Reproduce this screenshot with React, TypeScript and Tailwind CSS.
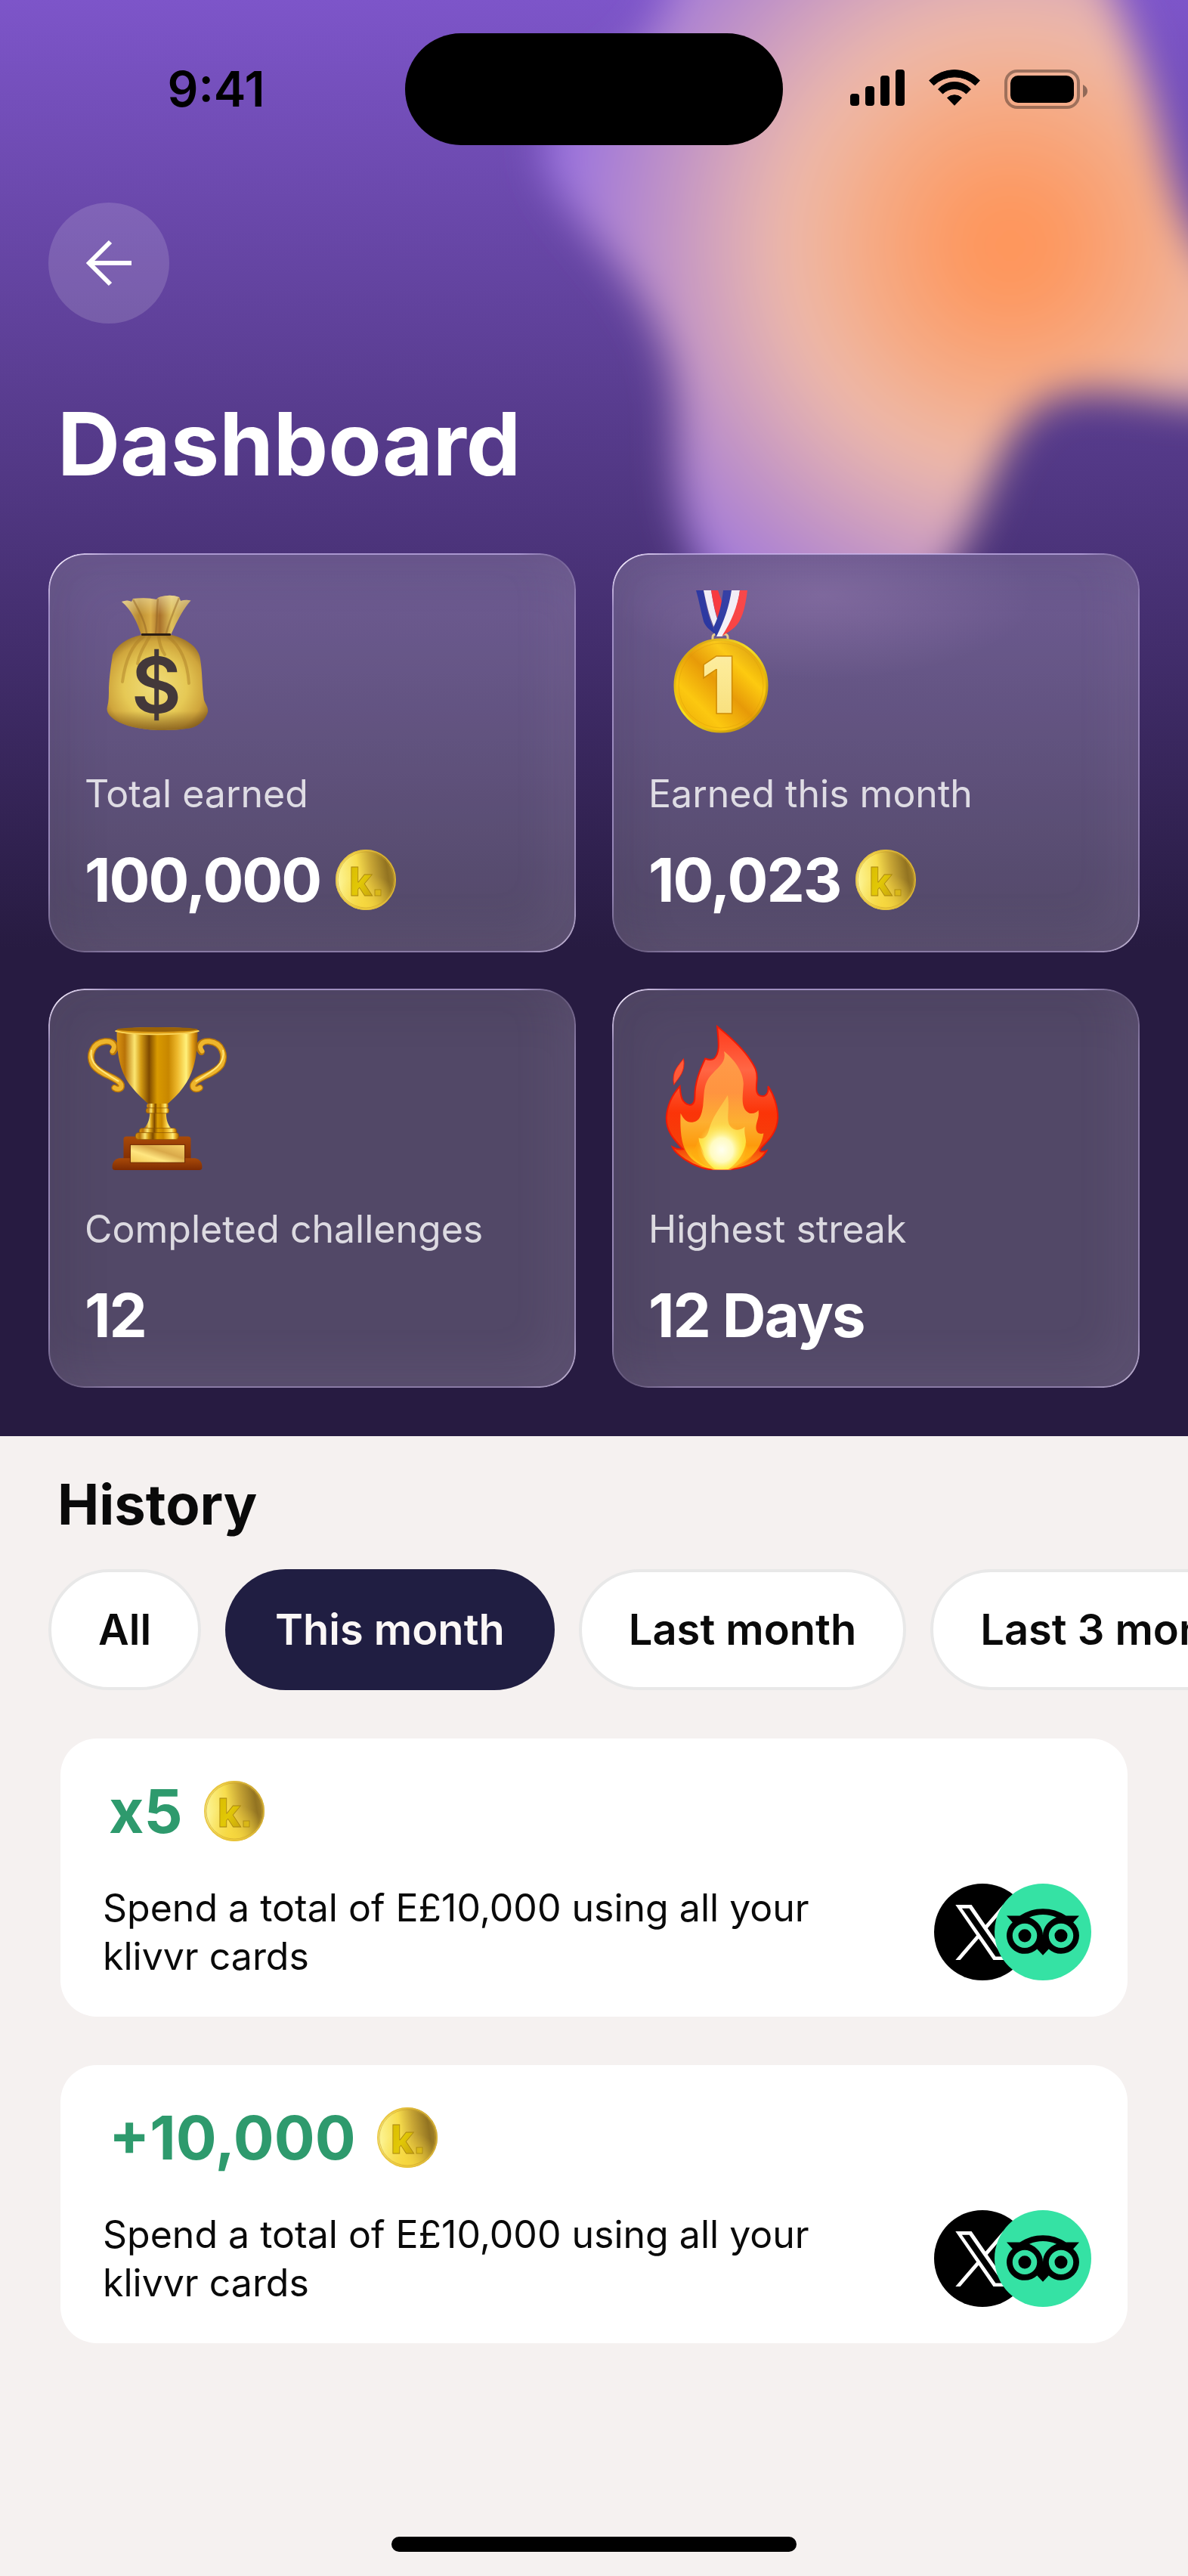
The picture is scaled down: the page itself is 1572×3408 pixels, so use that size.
import React, { useState } from "react";
import { SiTripadvisor } from "react-icons/si";

type StatCardProps = {
  label: string;
  value: string;
  icon: React.ReactNode;
  coin?: boolean;
  glow?: boolean;
};

type HistoryCardProps = {
  amount: string;
  description: string;
};

const filters = ["All", "This month", "Last month", "Last 3 months"];

const history: HistoryCardProps[] = [
  {
    amount: "x5",
    description: "Spend a total of E£10,000 using all your klivvr cards",
  },
  {
    amount: "+10,000",
    description: "Spend a total of E£10,000 using all your klivvr cards",
  },
];

function SignalIcon() {
  return (
    <svg className="h-12 w-[72px]" viewBox="0 0 72 48" aria-hidden="true">
      <rect x="0" y="32" width="12" height="16" rx="4" />
      <rect x="20" y="22" width="12" height="26" rx="4" />
      <rect x="40" y="8" width="12" height="40" rx="4" />
      <rect x="60" y="0" width="12" height="48" rx="4" />
    </svg>
  );
}

function WifiIcon() {
  return (
    <svg
      className="h-12 w-[68px]"
      viewBox="0 0 68 48"
      stroke="#000"
      strokeWidth="1"
      strokeLinejoin="round"
      aria-hidden="true">
      <path d="M.6 14.5A47 47 0 0 1 67.4 14.5L61.5 20.8A40 40 0 0 0 6.5 20.8Z" />
      <path d="M12.5 26A29 29 0 0 1 55.5 26L49.5 32A22 22 0 0 0 18.5 32Z" />
      <path d="M24.5 37.5A14 14 0 0 1 43.5 37.5L34 47.3Z" />
    </svg>
  );
}

function BatteryIcon() {
  return (
    <svg className="h-[52px] w-[110px]" viewBox="0 0 110 52" aria-hidden="true">
      <rect
        x="2"
        y="2"
        width="96"
        height="48"
        rx="15"
        fill="none"
        stroke="#000"
        strokeOpacity=".35"
        strokeWidth="4"
      />
      <path d="M104 20C108 22 110 25 110 28.500C110 32 108 35 104 37Z" fillOpacity=".4" />
      <rect x="8" y="8" width="84" height="36" rx="10" />
    </svg>
  );
}

function CoinIcon() {
  return (
    <svg className="size-20 shrink-0" viewBox="0 0 80 80" aria-hidden="true">
      <defs>
        <linearGradient id="coin-face" x1="0" y1=".45" x2="1" y2=".3">
          <stop offset="0" stopColor="#fdf69a" />
          <stop offset=".38" stopColor="#f7dd4d" />
          <stop offset=".6" stopColor="#c8a635" />
          <stop offset=".85" stopColor="#927321" />
          <stop offset="1" stopColor="#ab8a2b" />
        </linearGradient>
        <radialGradient id="coin-shine" cx=".5" cy="1" r=".6">
          <stop offset="0" stopColor="#f6d63c" />
          <stop offset="1" stopColor="#f6d63c" stopOpacity="0" />
        </radialGradient>
        <linearGradient id="coin-mark" x1="0" y1="0" x2="1" y2="1">
          <stop offset="0" stopColor="#d8ba00" />
          <stop offset=".5" stopColor="#e2c806" />
          <stop offset="1" stopColor="#c29c10" />
        </linearGradient>
      </defs>
      <circle cx="40" cy="40" r="40" fill="url(#coin-face)" />
      <circle cx="40" cy="40" r="40" fill="url(#coin-shine)" />
      <circle cx="40" cy="40" r="39" fill="none" stroke="#e3bd3a" strokeOpacity=".8" strokeWidth="2" />
      <circle cx="40" cy="40" r="37" fill="none" stroke="#c9a02c" strokeOpacity=".6" />
      <text
        x="18"
        y="61"
        fontFamily="Inter, sans-serif"
        fontSize="52"
        fontWeight="800"
        fill="url(#coin-mark)"
        stroke="#a98510"
        strokeWidth=".8">
        k
      </text>
      <rect x="52" y="53" width="8" height="8" fill="#d9b818" stroke="#a98510" strokeWidth=".8" />
    </svg>
  );
}

function MoneyBagIcon() {
  return (
    <svg className="size-48" viewBox="0 0 192 192" aria-hidden="true">
      <defs>
        <radialGradient id="bag-body" cx=".48" cy=".55" r=".62">
          <stop offset="0" stopColor="#efdc7c" />
          <stop offset=".5" stopColor="#e6c955" />
          <stop offset=".78" stopColor="#cfa53c" />
          <stop offset="1" stopColor="#8d6320" />
        </radialGradient>
        <linearGradient id="bag-neck" x1="0" x2="1">
          <stop offset="0" stopColor="#dcc078" />
          <stop offset=".25" stopColor="#b98a2f" />
          <stop offset=".42" stopColor="#d8ab45" />
          <stop offset=".55" stopColor="#a8702a" />
          <stop offset=".72" stopColor="#e0c05a" />
          <stop offset="1" stopColor="#b08a4a" />
        </linearGradient>
        <linearGradient id="bag-shade" x1="0" y1="0" x2="0" y2="1">
          <stop offset=".8" stopColor="#6d4712" stopOpacity="0" />
          <stop offset="1" stopColor="#6d4712" stopOpacity=".65" />
        </linearGradient>
        <linearGradient id="bag-neck-light" x1="0" y1="0" x2="0" y2="1">
          <stop offset="0" stopColor="#efe3ae" stopOpacity=".6" />
          <stop offset=".5" stopColor="#efe3ae" stopOpacity="0" />
        </linearGradient>
      </defs>
      <path
        d="M49 16Q57 13 62 16L64 12Q82 10 95 13Q97 10 100 9.500Q114 6 125 10L127 15Q134 13 140.500 14.500C131 25 124 38 114 60H75C69 42 62 27 49 16Z"
        fill="url(#bag-neck)"
      />
      <path
        d="M49 16Q57 13 62 16L64 12Q82 10 95 13Q97 10 100 9.500Q114 6 125 10L127 15Q134 13 140.500 14.500C131 25 124 38 114 60H75C69 42 62 27 49 16Z"
        fill="url(#bag-neck-light)"
      />
      <path
        d="M64 13C72 28 80 42 82 58M97 12C95 30 96 44 94 58M125 11C118 28 112 42 108 58"
        fill="none"
        stroke="#8f5f22"
        strokeOpacity=".45"
        strokeWidth="2.500"
      />
      <path
        d="M75 60H115C138 66 151 78 153 92C156 110 155 128 158 146C160 152 164 156 163 162C160 172 150 182 138 183.500C122 186 108 186 97 186C72 185 52 180 41 173C33 168 28 162 30 155C32 148 32 140 32 130C33 112 35 100 37 86C42 74 56 64 75 60Z"
        fill="url(#bag-body)"
      />
      <path
        d="M75 60H115C138 66 151 78 153 92C156 110 155 128 158 146C160 152 164 156 163 162C160 172 150 182 138 183.500C122 186 108 186 97 186C72 185 52 180 41 173C33 168 28 162 30 155C32 148 32 140 32 130C33 112 35 100 37 86C42 74 56 64 75 60Z"
        fill="url(#bag-shade)"
      />
      <path
        d="M78 62C64 72 54 92 50 122M86 62C78 76 72 86 70 98M98 62C99 74 102 80 106 86M110 62C126 74 136 94 138 124"
        fill="none"
        stroke="#a87b24"
        strokeOpacity=".45"
        strokeWidth="4"
        strokeLinecap="round"
      />
      <rect x="75" y="58" width="39" height="3" rx="1" fill="#2b1d12" />
      <text
        x="95"
        y="163"
        textAnchor="middle"
        fontFamily="Inter, sans-serif"
        fontSize="102"
        fontWeight="600"
        fill="#43383a">
        $
      </text>
    </svg>
  );
}

function MedalIcon() {
  return (
    <svg className="size-48" viewBox="0 0 192 192" aria-hidden="true">
      <defs>
        <linearGradient id="medal-face" x1=".1" y1=".9" x2=".9" y2=".1">
          <stop offset="0" stopColor="#eeb008" />
          <stop offset=".22" stopColor="#fcc810" />
          <stop offset=".5" stopColor="#e79a08" />
          <stop offset=".75" stopColor="#fdca10" />
          <stop offset="1" stopColor="#dd9f04" />
        </linearGradient>
        <linearGradient id="medal-rim" x1="0" y1="0" x2="1" y2="1">
          <stop offset="0" stopColor="#cf8f06" />
          <stop offset=".45" stopColor="#f8e21a" />
          <stop offset="1" stopColor="#b97c04" />
        </linearGradient>
        <linearGradient id="medal-number" x1="0" y1="0" x2="0" y2="1">
          <stop offset="0" stopColor="#fff2a8" />
          <stop offset="1" stopColor="#f7dc75" />
        </linearGradient>
      </defs>
      <path d="M63 1H73C77 24 80 40 90 60C80 53 75 48 73 42C69 28 67 14 63 1Z" fill="#1f2f9c" />
      <path d="M73 1H83C86 18 88 32 93 44L91 58C82 42 77 20 73 1Z" fill="#f4f4f8" />
      <path d="M83 1H92L98 18L93 42C88 30 85 14 83 1Z" fill="#fb2f2f" />
      <rect x="85" y="59" width="20" height="12" rx="4" fill="none" stroke="#e8cf86" strokeWidth="3" />
      <path d="M99 1H110C107 22 102 42 95 60L89 62L86 50C94 34 97 18 99 1Z" fill="#22339f" />
      <path d="M110 1H121C118 24 110 46 98 62H90C100 42 107 22 110 1Z" fill="#f7f7fa" />
      <path d="M121 1H131C128 26 123 42 114 50C107 56 102 58 97 62C110 42 118 22 121 1Z" fill="#fd3a35" />
      <circle cx="96" cy="127" r="61" fill="url(#medal-face)" stroke="url(#medal-rim)" strokeWidth="3" />
      <circle cx="96" cy="127" r="56" fill="none" stroke="#d89a07" strokeOpacity=".4" />
      <text
        x="92"
        y="164"
        textAnchor="middle"
        fontFamily="Inter, sans-serif"
        fontSize="104"
        fontWeight="900"
        fill="url(#medal-number)"
        stroke="#d08c06"
        strokeWidth="1.500">
        1
      </text>
    </svg>
  );
}

function TrophyHandle() {
  return (
    <>
      <path
        d="M37 36C44 27 36 21 26 22C9 24 4 41 10 53C18 66 44 70 48 80C49 86 43 87 39 84"
        fill="none"
        stroke="#b87608"
        strokeWidth="9"
        strokeLinecap="round"
      />
      <path
        d="M36 35C42 27 35 21 26 22C9 24 4 41 10 53C18 66 44 70 48 80C49 86 43 87 39 84"
        fill="none"
        stroke="#eeb52c"
        strokeWidth="6"
        strokeLinecap="round"
      />
      <path
        d="M8 34C4 52 22 62 44 75"
        fill="none"
        stroke="#ffe67a"
        strokeWidth="2"
        strokeLinecap="round"
      />
    </>
  );
}

function TrophyIcon() {
  return (
    <svg className="size-48" viewBox="0 0 192 194" aria-hidden="true">
      <defs>
        <linearGradient id="cup" x1="0" x2="1">
          <stop offset="0" stopColor="#d99410" />
          <stop offset=".1" stopColor="#b87207" />
          <stop offset=".22" stopColor="#fce671" />
          <stop offset=".3" stopColor="#d39a12" />
          <stop offset=".4" stopColor="#7f4a00" />
          <stop offset=".5" stopColor="#d99a00" />
          <stop offset=".64" stopColor="#c88700" />
          <stop offset=".75" stopColor="#eeb92c" />
          <stop offset=".86" stopColor="#fff07a" />
          <stop offset=".94" stopColor="#e09a12" />
          <stop offset="1" stopColor="#9c5f05" />
        </linearGradient>
        <linearGradient id="wood" x1="0" y1="0" x2="0" y2="1">
          <stop offset="0" stopColor="#a94a08" />
          <stop offset="1" stopColor="#7c2a02" />
        </linearGradient>
        <linearGradient id="plate" x1="0" y1="1" x2="1" y2="0">
          <stop offset="0" stopColor="#f0c552" />
          <stop offset=".35" stopColor="#ffe680" />
          <stop offset=".6" stopColor="#d9a94a" />
          <stop offset="1" stopColor="#fad56a" />
        </linearGradient>
      </defs>
      <TrophyHandle />
      <g transform="matrix(-1 0 0 1 192 0)">
        <TrophyHandle />
      </g>
      <path
        d="M42 10C42 44 48 66 62 83C70 93 78 100 86 107H108C116 100 124 93 131 83C144 66 150 44 150 10Z"
        fill="url(#cup)"
      />
      <ellipse cx="96" cy="8" rx="56" ry="5" fill="#d99a16" />
      <ellipse cx="96" cy="6" rx="54" ry="3" fill="#9a6206" />
      <path d="M40 8C60 14 132 14 152 8" fill="none" stroke="#fbd65a" strokeWidth="2" />
      <path
        d="M86 107H108V118C108 128 111 136 117 140H76C82 136 86 128 86 118Z"
        fill="url(#cup)"
      />
      <rect x="82" y="105" width="29" height="6" rx="3" fill="url(#cup)" />
      <rect x="81" y="111" width="31" height="7" rx="3" fill="url(#cup)" stroke="#8a5203" strokeWidth=".7" />
      <rect x="72" y="138" width="50" height="8" rx="4" fill="url(#cup)" stroke="#8a5203" strokeWidth=".7" />
      <rect x="51" y="149" width="90" height="36" rx="4" fill="url(#wood)" />
      <rect x="67" y="144" width="58" height="9" rx="4" fill="url(#cup)" stroke="#8a5203" strokeWidth=".7" />
      <path
        d="M45 178H147Q155 180 156 188V191Q156 194 152 194H40Q36 194 36 191V188Q37 180 45 178Z"
        fill="url(#wood)"
      />
      <rect x="60" y="160" width="73" height="24" fill="url(#plate)" stroke="#6d2702" strokeWidth="1" />
    </svg>
  );
}

function FireIcon() {
  return (
    <svg className="size-48" viewBox="0 0 192 194" aria-hidden="true">
      <defs>
        <linearGradient id="fire-outer" x1="0" y1="0" x2="0" y2="1">
          <stop offset="0" stopColor="#ff3a1c" />
          <stop offset=".3" stopColor="#ff6644" />
          <stop offset=".6" stopColor="#fb3408" />
          <stop offset=".85" stopColor="#f4400a" />
          <stop offset="1" stopColor="#ff9a12" />
        </linearGradient>
        <linearGradient id="fire-mid" x1="0" y1="0" x2="0" y2="1">
          <stop offset="0" stopColor="#ff9c4a" />
          <stop offset=".35" stopColor="#ff9440" />
          <stop offset=".6" stopColor="#fdaf30" />
          <stop offset=".8" stopColor="#fd9a0c" />
          <stop offset="1" stopColor="#ffdc20" />
        </linearGradient>
        <linearGradient id="fire-inner" x1="0" y1="0" x2="0" y2="1">
          <stop offset="0" stopColor="#fdbb45" />
          <stop offset=".5" stopColor="#fddb4d" />
          <stop offset="1" stopColor="#ffe60a" />
        </linearGradient>
        <radialGradient id="fire-core" cx=".5" cy=".6" r=".5">
          <stop offset="0" stopColor="#fffff0" />
          <stop offset=".45" stopColor="#fffbc0" />
          <stop offset="1" stopColor="#ffee50" stopOpacity="0" />
        </radialGradient>
      </defs>
      <path
        d="M91 2C106 14 120 26 132 42C142 56 145 62 144 74C143 84 142 94 150 95C157 96 160 90 159 82C166 92 172 108 172 124C171 142 162 152 150 164Q147 168 149 169Q153 170 157 168C152 178 144 183 134 187C120 193 106 194 91 194C74 194 60 188 48 180C40 174 34 170 31 163Q38 167 45 166C32 152 23 142 23 124C24 106 32 92 41 82C42 92 42 104 54 107C60 107 61 102 61 96C61 76 68 60 75 45C80 47 84 47 87 45C96 36 92 18 91 2Z"
        fill="url(#fire-outer)"
        stroke="#ee1a06"
        strokeWidth="2"
      />
      <path
        d="M46 45C49 62 40 70 33 80C30 62 38 56 46 45Z"
        fill="#ff5a38"
        stroke="#f0200c"
        strokeWidth="1"
      />
      <path
        d="M100 35C114 46 127 64 126 80C125 98 122 112 134 118C140 119 144 117 146 114C148 124 142 130 143 139C144 146 149 146 153 145C151 158 144 170 134 177C120 188 108 193 94 193C78 193 66 187 56 178C44 166 41 148 42 118C46 126 50 130 56 130C68 130 70 120 72 108C74 92 72 80 82 68C92 56 104 50 100 35Z"
        fill="url(#fire-mid)"
      />
      <path
        d="M105 94C108 112 103 124 107 133C112 142 122 142 128 136C126 146 131 152 129 162C124 176 116 186 106 193H88C78 186 74 178 73 172C71 164 67 160 66 151C74 154 78 148 80 140C84 124 94 112 105 94Z"
        fill="url(#fire-inner)"
      />
      <ellipse cx="97" cy="160" rx="34" ry="36" fill="url(#fire-core)" />
      <path
        d="M66 151C68 172 76 184 88 193C74 190 62 182 56 172C60 168 64 160 66 151ZM129 156C128 172 118 184 106 193C120 190 134 182 140 172C134 170 130 164 129 156Z"
        fill="#ffa90f"
        fillOpacity=".6"
      />
    </svg>
  );
}

function XLogo() {
  return (
    <svg className="h-[73px] w-[72px]" viewBox="0 0 1200 1227" fill="#fff" aria-hidden="true">
      <path d="M714.163 519.284L1160.89 0H1055.03L667.137 450.887L357.328 0H0L468.492 681.821L0 1226.37H105.866L515.491 750.218L842.672 1226.37H1200L714.137 519.284H714.163ZM569.165 687.828L521.697 619.934L144.011 79.6944H306.615L611.412 515.685L658.88 583.579L1055.08 1150.3H892.476L569.165 687.854V687.828Z" />
    </svg>
  );
}

function HeaderGlow() {
  return (
    <svg
      className="absolute right-0 top-0 h-[733px] w-[972px]"
      viewBox="600 0 972 733"
      aria-hidden="true">
      <defs>
        <radialGradient id="glow" gradientUnits="userSpaceOnUse" cx="1337" cy="325" r="600">
          <stop offset="0" stopColor="#ff955a" />
          <stop offset=".1" stopColor="#fd9860" />
          <stop offset=".3" stopColor="#f6a982" />
          <stop offset=".48" stopColor="#eeb8a6" />
          <stop offset=".6" stopColor="#dcabb6" />
          <stop offset=".78" stopColor="#bd90c8" />
          <stop offset="1" stopColor="#9b74de" />
        </radialGradient>
        <filter id="soft" x="-20%" y="-20%" width="140%" height="140%">
          <feGaussianBlur stdDeviation="26" />
        </filter>
      </defs>
      <path
        d="M900 -80C890 0 870 50 800 92C740 130 700 180 728 236C760 300 830 350 866 430C905 510 890 580 896 640C904 720 930 790 1000 820H1190C1255 780 1285 700 1306 645C1335 570 1362 525 1430 518C1500 516 1560 535 1700 545V430C1600 380 1560 290 1540 200C1520 110 1490 20 1440 -80Z"
        fill="url(#glow)"
        filter="url(#soft)"
      />
    </svg>
  );
}

function StatCard({ label, value, icon, coin, glow }: StatCardProps) {
  return (
    <article className="relative overflow-hidden rounded-[48px] bg-white/20 p-12 text-white shadow-[inset_24px_24px_60px_rgba(40,30,60,0.12),inset_-24px_-24px_60px_rgba(170,150,190,0.12)] before:pointer-events-none before:absolute before:inset-0 before:rounded-[48px] before:bg-[conic-gradient(rgba(215,195,255,0.6)_0deg,rgba(215,195,255,0.6)_46deg,rgba(215,195,255,0.1)_52deg,rgba(215,195,255,0.4)_62deg,rgba(215,195,255,0.45)_118deg,rgba(235,220,255,0.65)_127deg,rgba(215,195,255,0.4)_134deg,rgba(215,195,255,0.4)_225deg,rgba(215,195,255,0.1)_232deg,rgba(215,195,255,0.5)_242deg,rgba(215,195,255,0.55)_299deg,rgba(245,235,255,0.95)_307deg,rgba(215,195,255,0.6)_315deg)] before:p-[2px] before:[mask:linear-gradient(#000_0_0)_content-box_exclude,linear-gradient(#000_0_0)]">
      {glow && (
        <div className="absolute inset-0 bg-[radial-gradient(ellipse_280px_110px_at_40%_56px,rgba(210,170,220,0.2),transparent)]" />
      )}
      {icon}
      <p className="mt-12 text-[50px] leading-[60px] text-white/80">{label}</p>
      <div className="mt-9 flex h-24 items-center gap-5">
        <p className="text-[80px] font-bold leading-24 tracking-tight">{value}</p>
        {coin && <CoinIcon />}
      </div>
    </article>
  );
}

function HistoryCard({ amount, description }: HistoryCardProps) {
  return (
    <li className="rounded-[48px] bg-white pb-12 pl-14 pr-12 pt-14">
      <div className="flex h-20 items-center gap-7 pl-2">
        <p className="text-[80px] font-bold leading-20 text-[#2e9a6d]">{amount}</p>
        <CoinIcon />
      </div>
      <div className="mt-14 flex items-center justify-between">
        <p className="max-w-[1000px] text-[50px] leading-16">{description}</p>
        <div className="flex shrink-0">
          <span className="flex size-32 items-center justify-center rounded-full bg-black">
            <XLogo />
          </span>
          <span className="-ml-12 flex size-32 items-center justify-center rounded-full bg-[#35e2a4]">
            <SiTripadvisor className="size-24 text-black" />
          </span>
        </div>
      </div>
    </li>
  );
}

function App() {
  const [active, setActive] = useState("This month");

  return (
    <main className="flex min-h-screen flex-col overflow-hidden bg-[#f5f1f0] font-['Inter',sans-serif] text-[#0a0a0a]">
      <header className="relative bg-[linear-gradient(#7d55c9_0%,#271b41_66%)] pb-16">
        <HeaderGlow />
        <div className="relative grid grid-cols-[1fr_500px_1fr] pt-11 text-black">
          <div className="flex items-center justify-center pl-9">
            <span className="text-[64px] font-semibold leading-16">9:41</span>
          </div>
          <div className="h-[148px] rounded-full bg-black" />
          <div className="flex items-center justify-center pr-11">
            <div className="flex items-start gap-8">
              <SignalIcon />
              <WifiIcon />
              <BatteryIcon />
            </div>
          </div>
        </div>

        <div className="relative px-16 pt-19">
          <button
            type="button"
            aria-label="Back"
            className="flex size-40 items-center justify-center rounded-full bg-white/15">
            <svg
              className="size-16"
              viewBox="0 0 64 64"
              fill="none"
              stroke="#fff"
              strokeWidth="6"
              aria-hidden="true">
              <path d="M62 32H6M34 4L6 32L34 60" />
            </svg>
          </button>
          <h1 className="mt-24 pl-3 text-[115px] font-bold leading-32 text-white">
            Dashboard
          </h1>
          <section className="mt-20 grid grid-cols-2 gap-12">
            <StatCard label="Total earned" value="100,000" icon={<MoneyBagIcon />} coin />
            <StatCard label="Earned this month" value="10,023" icon={<MedalIcon />} coin glow />
            <StatCard label="Completed challenges" value="12" icon={<TrophyIcon />} />
            <StatCard label="Highest streak" value="12 Days" icon={<FireIcon />} />
          </section>
        </div>
      </header>

      <section className="pt-12">
        <h2 className="pl-19 text-[74px] font-bold leading-21">History</h2>
        <div className="mt-11 flex gap-8 overflow-hidden pl-16">
          {filters.map((filter) => (
            <button
              key={filter}
              type="button"
              aria-pressed={filter === active}
              onClick={() => setActive(filter)}
              className={
                filter === active
                  ? "h-40 shrink-0 rounded-full bg-[#201e42] px-[66px] text-[56px] font-semibold text-[#fbf7f6]"
                  : "h-40 shrink-0 rounded-full border-4 border-[#e8e8e8] bg-white px-[62px] text-[56px] font-semibold"
              }>
              {filter}
            </button>
          ))}
        </div>
        <ul className="mt-16 flex flex-col gap-16 px-20">
          {history.map((item) => (
            <HistoryCard key={item.amount} {...item} />
          ))}
        </ul>
      </section>

      <div className="mx-auto mb-8 mt-auto h-5 w-[536px] rounded-full bg-black" />
    </main>
  );
}

export default App;
